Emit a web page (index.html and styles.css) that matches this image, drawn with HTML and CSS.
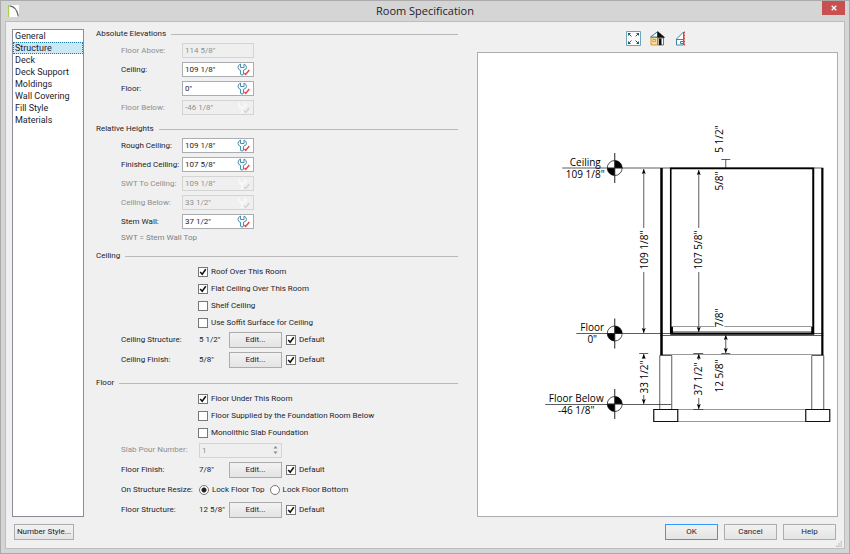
FILE: index.html
```html
<!DOCTYPE html>
<html lang="en">
<head>
<meta charset="utf-8">
<title>Room Specification</title>
<link rel="stylesheet" href="styles.css">
</head>
<body>
<svg class="symbols" aria-hidden="true">
  <symbol id="wrench" viewBox="0 0 13 13">
    <path class="wrench-body" d="M3.500 1Q1 2 1 4.500Q1 6.500 3.500 7.300V11Q3.500 12 5 12Q6.500 12 6.500 11V7.300Q9.500 6.500 9.500 4.500Q9.500 2 7 1V4.500H3.500Z"/>
    <path class="wrench-check" d="M7.500 10L8.700 11.500L12.300 7"/>
  </symbol>
  <symbol id="marker" viewBox="-8 -16 16 32">
    <circle r="7.5" fill="#fff" stroke="#222" stroke-width=".8"/>
    <path d="M0 0V-7.5A7.5 7.5 0 0 1 7.5 0ZM0 0V7.5A7.5 7.5 0 0 1 -7.5 0Z"/>
    <path d="M0 -15V15M-8 0H8" stroke="#222"/>
  </symbol>
</svg>
<div class="window">
  <header class="titlebar">
    <svg class="logo" viewBox="0 0 11 12" aria-hidden="true"><path fill="#fff" d="M0 0h11v12H0z"/><path d="M.6 0V12" stroke="#a9d14c" stroke-width="1.3"/><path d="M1.5 .8Q9 1.5 10.3 11.5" fill="none" stroke="#666" stroke-width="1.2"/></svg>
    <h1>Room Specification</h1>
    <button class="close" aria-label="Close"><svg viewBox="0 0 6 6"><path d="M.7 .7L5.3 5.3M5.3 .7L.7 5.3" stroke="#fff" stroke-width="1.3"/></svg></button>
  </header>
  <main class="client">
    <div class="columns">
      <nav class="pages">
        <a href="#">General</a>
        <a href="#" class="current">Structure</a>
        <a href="#">Deck</a>
        <a href="#">Deck Support</a>
        <a href="#">Moldings</a>
        <a href="#">Wall Covering</a>
        <a href="#">Fill Style</a>
        <a href="#">Materials</a>
      </nav>
      <form class="settings">
        <section>
          <h2>Absolute Elevations</h2>
          <div class="fields">
            <div class="row off"><label for="fa">Floor Above:</label><span class="field"><input id="fa" value='114 5/8"' disabled></span></div>
            <div class="row"><label for="ce">Ceiling:</label><span class="field"><input id="ce" value='109 1/8"'><svg><use href="#wrench"/></svg></span></div>
            <div class="row"><label for="fl">Floor:</label><span class="field"><input id="fl" value='0"'><svg><use href="#wrench"/></svg></span></div>
            <div class="row off"><label for="fb">Floor Below:</label><span class="field"><input id="fb" value='-46 1/8"' disabled><svg><use href="#wrench"/></svg></span></div>
          </div>
        </section>
        <section>
          <h2>Relative Heights</h2>
          <div class="fields">
            <div class="row"><label for="rc">Rough Ceiling:</label><span class="field"><input id="rc" value='109 1/8"'><svg><use href="#wrench"/></svg></span></div>
            <div class="row"><label for="fc">Finished Ceiling:</label><span class="field"><input id="fc" value='107 5/8"'><svg><use href="#wrench"/></svg></span></div>
            <div class="row off"><label for="sc">SWT To Ceiling:</label><span class="field"><input id="sc" value='109 1/8"' disabled><svg><use href="#wrench"/></svg></span></div>
            <div class="row off"><label for="cb">Ceiling Below:</label><span class="field"><input id="cb" value='33 1/2"' disabled><svg><use href="#wrench"/></svg></span></div>
            <div class="row"><label for="sw">Stem Wall:</label><span class="field"><input id="sw" value='37 1/2"'><svg><use href="#wrench"/></svg></span></div>
            <p class="note">SWT = Stem Wall Top</p>
          </div>
        </section>
        <section>
          <h2>Ceiling</h2>
          <div class="checks">
            <label><input type="checkbox" checked>Roof Over This Room</label>
            <label><input type="checkbox" checked>Flat Ceiling Over This Room</label>
            <label><input type="checkbox">Shelf Ceiling</label>
            <label><input type="checkbox">Use Soffit Surface for Ceiling</label>
          </div>
          <div class="layers">
            <div class="layer"><span>Ceiling Structure:</span><span>5 1/2"</span><button type="button">Edit...</button><label><input type="checkbox" checked>Default</label></div>
            <div class="layer"><span>Ceiling Finish:</span><span>5/8"</span><button type="button">Edit...</button><label><input type="checkbox" checked>Default</label></div>
          </div>
        </section>
        <section>
          <h2>Floor</h2>
          <div class="checks">
            <label><input type="checkbox" checked>Floor Under This Room</label>
            <label><input type="checkbox">Floor Supplied by the Foundation Room Below</label>
            <label><input type="checkbox">Monolithic Slab Foundation</label>
          </div>
          <div class="layers">
            <div class="layer off"><label for="slab">Slab Pour Number:</label><span class="field spin"><input id="slab" value="1" disabled><svg class="arrows" viewBox="0 0 9 12"><path d="M2.5 4.5L4.5 2L6.5 4.5ZM2.5 7.5L4.5 10L6.5 7.5Z"/></svg></span></div>
            <div class="layer"><span>Floor Finish:</span><span>7/8"</span><button type="button">Edit...</button><label><input type="checkbox" checked>Default</label></div>
            <div class="layer"><span>On Structure Resize:</span><span class="radios"><label><input type="radio" name="lock" checked>Lock Floor Top</label><label><input type="radio" name="lock">Lock Floor Bottom</label></span></div>
            <div class="layer"><span>Floor Structure:</span><span>12 5/8"</span><button type="button">Edit...</button><label><input type="checkbox" checked>Default</label></div>
          </div>
        </section>
      </form>
      <section class="preview">
        <div class="toolbar">
          <button aria-label="Fill window"><svg viewBox="0 0 15 15"><path d="M.5 .5h14v14H.5z" fill="#fff" stroke="#6fa3b8"/><path d="M2 5V2H5ZM10 2H13V5ZM13 10V13H10ZM5 13H2V10Z" fill="#15607e"/><path d="M2 2L5.5 5.500M13 2L9.500 5.500M13 13L9.500 9.500M2 13L5.500 9.500" stroke="#15607e"/></svg></button>
          <button aria-label="Color"><svg viewBox="0 0 15 15"><path d="M1 6.500H7.500V14H1Z" fill="#fcdb94" stroke="#d49a3a"/><path d="M3 8.500H5.500V10.500H3Z" fill="#fff3cf" stroke="#c98a2c" stroke-width=".8"/><path d="M.5 6L7.500 .8V6Z" fill="#fff" stroke="#3c7f94"/><path d="M7.500 0L14.500 6V7H7.500Z" fill="#111"/><path d="M8 7H13.500V14H8Z" fill="#fff" stroke="#777"/><path d="M9 7.500H11.500V14H9Z" fill="#111"/></svg></button>
          <button aria-label="Cross section"><svg viewBox="0 0 15 15"><path d="M2.500 8L9.500 1V14H2.500Z" fill="#fff" stroke="#3486a6"/><path d="M2.500 8.500H9.500M9 10.500H6.500V12.500H9" fill="none" stroke="#3486a6"/><path d="M10.500 .5V14.500" stroke="#d34b4b" stroke-dasharray="2 1"/></svg></button>
        </div>
        <div class="canvas">
          <svg viewBox="478 53 359 463" role="img" aria-label="Room section">
            <defs>
              <marker id="arrow" markerUnits="userSpaceOnUse" markerWidth="6" markerHeight="6" refX="5" refY="2.500" orient="auto-start-reverse"><path d="M0 .5L5 2.500L0 4.500L1 2.500Z"/></marker>
            </defs>
            <g class="soft">
              <path d="M671 326.500H812M671 331.500H812M660 354.500H823M677 409.500H805M677 421.500H805"/>
            </g>
            <g class="thin">
              <path d="M562 168H823M576 333.500H823M545 404.500H671M660 335.500H823"/>
              <path d="M659.500 355.500H671.500V409.500H659.500ZM811.500 355.500H823.500V409.500H811.500Z"/>
              <path d="M721 159.500H730M725.500 159.500V168M721 353.500H730M639 353.500H648M693 353.500H703M693 409.500H703"/>
              <path class="dim" d="M643.500 228V169"/>
              <path class="dim" d="M643.500 272V333"/>
              <path class="dim" d="M698.500 228V170"/>
              <path class="dim" d="M698.500 272V332"/>
              <path class="dim" d="M643.500 359V354"/>
              <path class="dim" d="M643.500 395V404"/>
              <path class="dim" d="M698.500 360V354"/>
              <path class="dim" d="M698.500 398V409"/>
              <path class="dim both" d="M725.500 335V353"/>
            </g>
            <g class="footing"><path d="M653.500 409.500H677.500V421.500H653.500ZM805.500 409.500H829.500V421.500H805.500Z"/></g>
            <path d="M660 168H662.500V355H660ZM821 168H823.200V355H821ZM669.700 167.500H814V169.300H671.300V334H669.700ZM812 168H814V334H812ZM670 332.500H814V334.700H670ZM671 327H672.700V333H671ZM811 327H812.500V333H811Z"/>
            <path d="M714 308H724V328H714Z" fill="#fff"/>
            <use href="#marker" x="606.500" y="152" width="16" height="32"/>
            <use href="#marker" x="606.500" y="317.500" width="16" height="32"/>
            <use href="#marker" x="606.500" y="388" width="16" height="32"/>
            <g class="names">
              <text x="585" y="166">Ceiling</text><text x="585" y="178">109 1/8"</text>
              <text x="592" y="331">Floor</text><text x="592" y="343">0"</text>
              <text x="576" y="402">Floor Below</text><text x="576" y="414">-46 1/8"</text>
            </g>
            <g class="sizes">
              <text transform="translate(648 250) rotate(-90)">109 1/8"</text>
              <text transform="translate(702 250) rotate(-90)">107 5/8"</text>
              <text transform="translate(723 139) rotate(-90)">5 1/2"</text>
              <text transform="translate(723 181) rotate(-90)">5/8"</text>
              <text transform="translate(723 318) rotate(-90)">7/8"</text>
              <text transform="translate(648 377) rotate(-90)">33 1/2"</text>
              <text transform="translate(702 379) rotate(-90)">37 1/2"</text>
              <text transform="translate(723 376) rotate(-90)">12 5/8"</text>
            </g>
          </svg>
        </div>
      </section>
    </div>
    <footer class="actions">
      <button class="number">Number Style...</button>
      <button class="primary">OK</button>
      <button>Cancel</button>
      <button>Help</button>
    </footer>
    <svg class="grip" viewBox="0 0 8 8" aria-hidden="true"><path d="M6 0h2v2H6zM3 3h2v2H3zM6 3h2v2H6zM0 6h2v2H0zM3 6h2v2H3zM6 6h2v2H6z" fill="#bdbdbd"/></svg>
  </main>
</div>
</body>
</html>
```
FILE: styles.css
```css
* { box-sizing: border-box; }

body {
  margin: 0;
  color: #1c1c2c;
  font: 8px/10px Roboto, "Noto Sans", sans-serif;
}

h1, h2, p { margin: 0; font-weight: 400; }
svg { display: block; }
.symbols { position: absolute; width: 0; height: 0; }

input, button { font: inherit; color: inherit; margin: 0; }

.window {
  display: flex;
  flex-direction: column;
  min-height: 100vh;
  padding: 0 4px 4px;
  background: #d5d5d5;
  border: 1px solid #aaa;
}

.titlebar {
  display: grid;
  grid-template-columns: 24px 1fr 24px;
  height: 20px;
}
.logo { width: 11px; height: 12px; margin: 4px 0 0 3px; }
.titlebar h1 { font-size: 11px; line-height: 20px; text-align: center; font-family: "Open Sans", sans-serif; }
.close {
  display: grid;
  place-items: center;
  width: 23px;
  height: 14px;
  justify-self: end;
  padding: 0;
  border: 0;
  background: #c75050;
}
.close svg { width: 6px; height: 6px; }

.client {
  position: relative;
  flex: 1;
  display: flex;
  flex-direction: column;
  padding: 6px 6px 8px;
  background: #f0f0f0;
  border: 1px solid #bdbdbd;
}

.columns {
  flex: 1;
  display: grid;
  grid-template-columns: 84px minmax(0, 1fr) 19px minmax(0, 1fr);
}

.pages {
  margin: 1px 12px 0 0;
  background: #fff;
  border: 1px solid #8a8d99;
  font: 9px/12px Roboto, "Open Sans", sans-serif;
}
.pages a {
  display: block;
  height: 12px;
  padding-left: 2px;
  line-height: 12px;
  color: inherit;
  text-decoration: none;
}
.pages .current {
  background: #cbe8f6;
  outline: 1px dotted #1a7fae;
  outline-offset: -1px;
}

.settings { display: flex; flex-direction: column; margin-bottom: -3px; }
.settings section + section { margin-top: 8px; }

h2 {
  display: flex;
  align-items: center;
  gap: 5px;
  font-size: 8px;
  line-height: 12px;
}
h2::after { content: ""; flex: 1; height: 1px; background: #b9b9b9; }

.fields { display: grid; gap: 4px; padding: 3px 0 0 25px; }
.row { display: grid; grid-template-columns: 61px 72px; align-items: center; height: 15px; white-space: nowrap; }
.off { color: #8f8f8f; }
.note { color: #808080; line-height: 9px; }

.field {
  display: flex;
  align-items: center;
  height: 15px;
  padding-right: 3px;
  background: #fff;
  border: 1px solid #abadb3;
}
.off .field { background: #efefef; border-color: #d4d4d4; }
.field input {
  flex: 1;
  min-width: 0;
  width: 0;
  height: 13px;
  padding: 0 2px;
  border: 0;
  background: none;
}
.field svg { width: 13px; height: 13px; }
.wrench-body { fill: #f4fafc; stroke: #4b8fae; stroke-width: 1; }
.wrench-check { fill: none; stroke: #e0463c; stroke-width: 1.4; }
.off .field svg { filter: grayscale(1) brightness(1.8); opacity: .5; }

.checks { display: grid; padding: 1px 0 1px 102px; }
.checks label, .layer label, .radios { display: flex; align-items: center; }
.checks label { height: 17px; }

input[type="checkbox"], input[type="radio"] {
  appearance: none;
  flex: none;
  width: 10px;
  height: 10px;
  margin-right: 3px;
  background: #fff center / 8px 8px no-repeat;
  border: 1px solid #777;
}
input[type="checkbox"]:checked {
  background-image: url("data:image/svg+xml,%3Csvg xmlns='http://www.w3.org/2000/svg' viewBox='0 0 8 8'%3E%3Cpath d='M1.200 4L3.200 6.300L6.800 1.200' fill='none' stroke='%23111' stroke-width='1.500'/%3E%3C/svg%3E");
}
input[type="radio"] { border-radius: 50%; }
input[type="radio"]:checked { background-image: radial-gradient(circle, #222 2px, transparent 3px); }

.layers { display: grid; gap: 4px; padding: 0 0 1px 25px; }
.layer {
  display: grid;
  grid-template-columns: 78px 30px 53px 1fr;
  align-items: center;
  height: 16px;
}
.layer button + label { padding-left: 4px; }
.spin { grid-column: 2 / 4; padding-right: 1px; }
.off .spin .arrows { width: 9px; height: 12px; filter: none; opacity: 1; fill: #888; }
.radios { grid-column: 2 / 5; gap: 5px; }

.layer button, .actions button {
  height: 16px;
  padding: 0;
  text-align: center;
  white-space: nowrap;
  background: linear-gradient(#f2f2f2, #e4e4e4);
  border: 1px solid #acacac;
}

.preview { grid-column: 4; display: flex; flex-direction: column; }
.toolbar { display: flex; justify-content: center; align-items: center; gap: 9px; height: 24px; padding-bottom: 4px; }
.toolbar button { padding: 0; border: 0; background: none; }
.toolbar svg { width: 15px; height: 15px; }
.canvas { flex: 1; display: flex; background: #fff; border: 1px solid #abadb3; }
.canvas svg { width: 100%; height: 0; min-height: 100%; }

.soft path { fill: none; stroke: #999; }
.thin path { fill: none; stroke: #333; stroke-width: .8; }
.thin .dim { marker-end: url(#arrow); }
.thin .both { marker-start: url(#arrow); }
.footing path { fill: #fff; stroke: #111; stroke-width: 1.2; }
.canvas text { font: 10px "Open Sans", sans-serif; fill: #000; text-anchor: middle; }

.actions { display: flex; gap: 6px; padding: 7px 2px 0; }
.actions button { width: 53px; }
.actions .number { width: 60px; margin-right: auto; }
.actions .primary { border-color: #3399ff; }

.grip { position: absolute; right: 2px; bottom: 1px; width: 6px; height: 6px; }
```
